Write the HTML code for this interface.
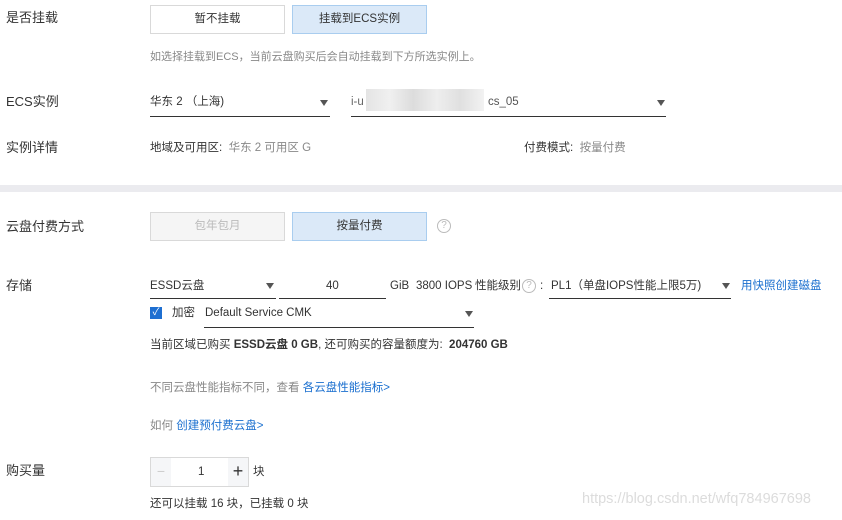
<!DOCTYPE html>
<html><head><meta charset="utf-8"><style>
*{margin:0;padding:0;box-sizing:border-box}
body{width:842px;height:520px;background:#fff;font-family:"Liberation Sans","Noto Sans CJK SC",sans-serif;color:#333;position:relative;overflow:hidden;font-size:11.5px}
.a{position:absolute;white-space:nowrap;line-height:15px}
.lbl{font-size:13px;color:#333}
.btn{position:absolute;border:1px solid #d9d9d9;text-align:center;font-size:11.5px;color:#333;background:#fff}
.sel{background:#dbe9f8;border-color:#a9cdef}
.ul{position:absolute;height:1px;background:#333}
.tri{position:absolute;width:0;height:0;border-left:4px solid transparent;border-right:4px solid transparent;border-top:6px solid #555}
.g{color:#888}
.blue{color:#1a6fcf}
.q{position:absolute;width:14px;height:14px;border:1px solid #bbb;border-radius:50%;color:#bbb;font-size:10px;text-align:center;line-height:12px}
</style></head><body>
<div class="a lbl" style="left:6px;top:10px">是否挂载</div>
<div class="btn" style="left:150px;top:5px;width:135px;height:29px;line-height:27px">暂不挂载</div>
<div class="btn sel" style="left:292px;top:5px;width:135px;height:29px;line-height:27px">挂载到ECS实例</div>
<div class="a g" style="left:150px;top:50px;font-size:11px">如选择挂载到ECS，当前云盘购买后会自动挂载到下方所选实例上。</div>

<div class="a lbl" style="left:6px;top:94px">ECS实例</div>
<div class="a" style="left:150px;top:95px">华东 2 （上海)</div>
<div class="tri" style="left:320px;top:100px"></div>
<div class="ul" style="left:150px;top:116px;width:180px"></div>
<div class="a" style="left:351px;top:95px;color:#666">i-u</div>
<div class="a" style="left:366px;top:89px;width:118px;height:22px;background:linear-gradient(90deg,#e4e4e4,#f0f0f0 20%,#dcdcdc 40%,#eee 60%,#e0e0e0 80%,#f2f2f2)"></div>
<div class="a" style="left:488px;top:95px;color:#555">cs_05</div>
<div class="tri" style="left:657px;top:100px"></div>
<div class="ul" style="left:351px;top:116px;width:315px"></div>

<div class="a lbl" style="left:6px;top:140px">实例详情</div>
<div class="a" style="left:150px;top:141px">地域及可用区: <span class="g">&nbsp;华东 2 可用区 G</span></div>
<div class="a" style="left:524px;top:141px">付费模式: <span class="g">&nbsp;按量付费</span></div>

<div class="a" style="left:0;top:185px;width:842px;height:7px;background:#ebebef"></div>

<div class="a lbl" style="left:6px;top:219px">云盘付费方式</div>
<div class="btn" style="left:150px;top:212px;width:135px;height:29px;line-height:27px;background:#f5f5f5;color:#bbb">包年包月</div>
<div class="btn sel" style="left:292px;top:212px;width:135px;height:29px;line-height:27px">按量付费</div>
<div class="q" style="left:437px;top:219px">?</div>

<div class="a lbl" style="left:6px;top:278px">存储</div>
<div class="a" style="left:150px;top:279px">ESSD云盘</div>
<div class="tri" style="left:266px;top:283px"></div>
<div class="ul" style="left:150px;top:298px;width:126px"></div>
<div class="a" style="left:326px;top:279px">40</div>
<div class="ul" style="left:279px;top:298px;width:107px"></div>
<div class="a" style="left:390px;top:279px">GiB</div>
<div class="a" style="left:416px;top:279px">3800 IOPS</div>
<div class="a" style="left:475px;top:279px">性能级别</div>
<div class="q" style="left:522px;top:279px">?</div>
<div class="a" style="left:540px;top:279px">:</div>
<div class="a" style="left:551px;top:279px">PL1（单盘IOPS性能上限5万)</div>
<div class="tri" style="left:722px;top:283px"></div>
<div class="ul" style="left:549px;top:298px;width:182px"></div>
<div class="a blue" style="left:741px;top:279px">用快照创建磁盘</div>

<div class="a" style="left:150px;top:307px;width:12px;height:12px;background:#1e6fd1;color:#fff;font-size:10px;line-height:12px;text-align:center">✓</div>
<div class="a" style="left:172px;top:306px">加密</div>
<div class="a" style="left:205px;top:306px">Default Service CMK</div>
<div class="tri" style="left:465px;top:311px"></div>
<div class="ul" style="left:204px;top:327px;width:270px"></div>

<div class="a" style="left:150px;top:338px">当前区域已购买 <b>ESSD云盘 0 GB</b>, 还可购买的容量额度为: &nbsp;<b>204760 GB</b></div>

<div class="a g" style="left:150px;top:381px">不同云盘性能指标不同，查看 <span class="blue">各云盘性能指标&gt;</span></div>
<div class="a g" style="left:150px;top:419px">如何 <span class="blue">创建预付费云盘&gt;</span></div>

<div class="a lbl" style="left:6px;top:463px">购买量</div>
<div class="a" style="left:150px;top:457px;width:99px;height:30px;border:1px solid #d9d9d9"></div>
<div class="a" style="left:151px;top:458px;width:20px;height:28px;background:#f5f6f8;color:#ccc;text-align:center;line-height:26px;font-size:14px">−</div>
<div class="a" style="left:198px;top:465px">1</div>
<div class="a" style="left:228px;top:458px;width:20px;height:28px;background:#f5f6f8;color:#333;text-align:center;line-height:26px;font-size:18px">+</div>
<div class="a" style="left:253px;top:465px">块</div>
<div class="a" style="left:150px;top:497px">还可以挂载 16 块，已挂载 0 块</div>
<div class="a" style="left:582px;top:492px;font-size:14.5px;color:#dcdcdc">https://blog.csdn.net/wfq784967698</div>
</body></html>
